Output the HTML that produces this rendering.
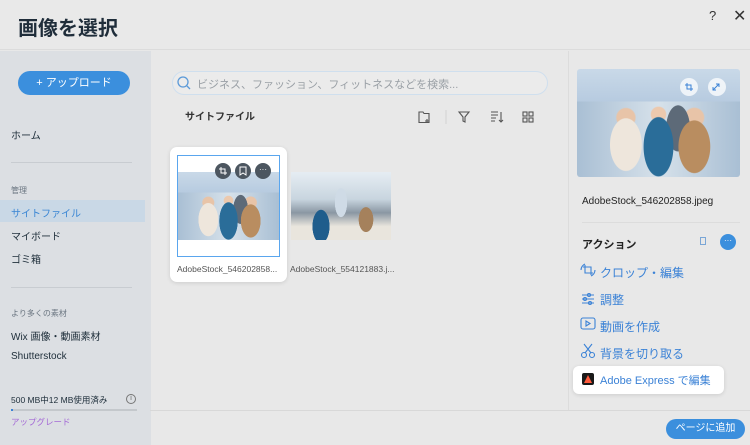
<!DOCTYPE html>
<html><head><meta charset="utf-8"><style>
*{margin:0;padding:0;box-sizing:border-box}
body{width:750px;height:445px;overflow:hidden;background:#e8e8e8;font-family:"Liberation Sans","Noto Sans CJK JP",sans-serif;position:relative;color:#20303c}
.a{position:absolute}
.photo1{background:linear-gradient(180deg,#c9d9e8 0%,#b7cbe0 30%,transparent 30%),radial-gradient(ellipse 16% 40% at 30% 70%,#eee6dc 60%,transparent 62%),radial-gradient(ellipse 15% 45% at 50% 72%,#2a6d99 60%,transparent 62%),radial-gradient(ellipse 16% 40% at 72% 72%,#b98d60 60%,transparent 62%),radial-gradient(ellipse 12% 35% at 62% 55%,#5d6a78 60%,transparent 62%),radial-gradient(circle at 30% 45%,#e8c4a8 7%,transparent 8%),radial-gradient(circle at 50% 42%,#ecc9ae 7%,transparent 8%),radial-gradient(circle at 72% 45%,#e8c4a8 7%,transparent 8%),linear-gradient(90deg,#a9bfd4,#d6e1ea 50%,#a9bfd4);}
.photo2{background:radial-gradient(ellipse 14% 40% at 30% 80%,#1f5d8c 60%,transparent 62%),radial-gradient(ellipse 12% 30% at 75% 70%,#a5815c 60%,transparent 62%),radial-gradient(ellipse 10% 35% at 50% 45%,#cfdbe6 60%,transparent 62%),linear-gradient(180deg,#e6edf3 0%,#c8d5df 40%,#8a97a3 60%,#e9e5dd 80%);}
.ic{position:absolute;width:16px;height:16px}
.act{position:absolute;left:600px;font-size:12px;color:#3b82d6}
</style></head><body>
<div class="a" style="left:0;top:0;width:750px;height:50px;background:#e9e9e9;border-bottom:1px solid #dcdcdc"></div>
<div class="a" style="left:18px;top:12px;font-size:20px;font-weight:bold;color:#1f2d3a">画像を選択</div>
<div class="a" style="left:709px;top:8px;font-size:13px;color:#333">?</div>
<div class="a" style="left:733px;top:6px;font-size:16px;color:#333">✕</div>
<!-- sidebar -->
<div class="a" style="left:0;top:51px;width:151px;height:394px;background:#dcdfe3"></div>
<div class="a" style="left:18px;top:71px;width:112px;height:24px;border-radius:12px;background:#3b8fdd;color:#fff;font-size:11px;text-align:center;line-height:24px">+ アップロード</div>
<div class="a" style="left:11px;top:127px;font-size:10px">ホーム</div>
<div class="a" style="left:11px;top:162px;width:121px;height:1px;background:#c8ccd1"></div>
<div class="a" style="left:11px;top:185px;font-size:8px;color:#6a7580">管理</div>
<div class="a" style="left:0;top:200px;width:145px;height:22px;background:#c9d8e6"></div>
<div class="a" style="left:11px;top:205px;font-size:10px;color:#3a86d4">サイトファイル</div>
<div class="a" style="left:11px;top:228px;font-size:10px">マイボード</div>
<div class="a" style="left:11px;top:251px;font-size:10px">ゴミ箱</div>
<div class="a" style="left:11px;top:287px;width:121px;height:1px;background:#c8ccd1"></div>
<div class="a" style="left:11px;top:308px;font-size:8px;color:#6a7580">より多くの素材</div>
<div class="a" style="left:11px;top:328px;font-size:10px">Wix 画像・動画素材</div>
<div class="a" style="left:11px;top:351px;font-size:10px">Shutterstock</div>
<div class="a" style="left:11px;top:394px;font-size:8.5px">500 MB中12 MB使用済み</div>
<div class="a" style="left:126px;top:394px;width:10px;height:10px;border:1px solid #777;border-radius:50%;font-size:7px;text-align:center;line-height:8px;color:#666">i</div>
<div class="a" style="left:11px;top:409px;width:126px;height:2px;background:#c4c8cc"></div>
<div class="a" style="left:11px;top:409px;width:2px;height:2px;background:#3b82d6"></div>
<div class="a" style="left:11px;top:416px;font-size:8.5px;color:#a46ad6">アップグレード</div>
<!-- main -->
<div class="a" style="left:172px;top:71px;width:376px;height:24px;border:1px solid #cfdfee;border-radius:12px;background:#ebebeb"></div>
<svg class="a" style="left:176px;top:75px" width="16" height="16"><circle cx="7" cy="7" r="5" fill="none" stroke="#5c9ad8" stroke-width="1.3"/><path d="M11 11l3 3" stroke="#5c9ad8" stroke-width="1.3"/></svg>
<div class="a" style="left:197px;top:76px;font-size:11px;color:#9aa0a6">ビジネス、ファッション、フィットネスなどを検索...</div>
<div class="a" style="left:185px;top:108px;font-size:10px;font-weight:bold;color:#333">サイトファイル</div>
<svg class="a" style="left:417px;top:109px" width="120" height="16" fill="none" stroke="#555" stroke-width="1.1"><path d="M2 3h4l1 1.5h5v9H2z M10 10v4 M8 12h4"/><line x1="29" y1="1" x2="29" y2="15" stroke="#d4d4d4"/><path d="M42 3h10l-4 5v5l-2-1v-4z"/><path d="M74 3h7M74 6h7M74 9h5M74 12h4M84 3v10M82 11l2 2 2-2" /><rect x="106" y="3" width="4" height="4"/><rect x="112" y="3" width="4" height="4"/><rect x="106" y="9" width="4" height="4"/><rect x="112" y="9" width="4" height="4"/></svg>
<div class="a" style="left:170px;top:147px;width:117px;height:135px;background:#fff;border-radius:7px;box-shadow:0 1px 4px rgba(0,0,0,.12)"></div>
<div class="a" style="left:177px;top:155px;width:103px;height:102px;border:1px solid #5aa6ee"></div>
<div class="a photo1" style="left:178px;top:172px;width:101px;height:68px"></div>
<div class="a" style="left:215px;top:163px;width:16px;height:16px;border-radius:50%;background:#4c5660"></div>
<div class="a" style="left:235px;top:163px;width:16px;height:16px;border-radius:50%;background:#4c5660"></div>
<div class="a" style="left:255px;top:163px;width:16px;height:16px;border-radius:50%;background:#4c5660;color:#fff;font-size:8px;text-align:center;line-height:14px">···</div>
<svg class="a" style="left:215px;top:163px" width="56" height="16" fill="none" stroke="#fff" stroke-width="1"><path d="M6 4v6h6M4 6h6v6"/><path d="M25 4h6v8l-3-2-3 2z"/></svg>
<div class="a" style="left:177px;top:264px;font-size:8.5px;color:#555">AdobeStock_546202858...</div>
<div class="a photo2" style="left:291px;top:172px;width:100px;height:68px"></div>
<div class="a" style="left:290px;top:264px;font-size:8.5px;color:#555">AdobeStock_554121883.j...</div>
<!-- right panel -->
<div class="a" style="left:568px;top:51px;width:1px;height:360px;background:#dcdcdc"></div>
<div class="a photo1" style="left:577px;top:69px;width:163px;height:108px;border-radius:3px"></div>
<div class="a" style="left:680px;top:78px;width:18px;height:18px;border-radius:50%;background:rgba(255,255,255,.75)"></div>
<div class="a" style="left:708px;top:78px;width:18px;height:18px;border-radius:50%;background:rgba(255,255,255,.75)"></div>
<svg class="a" style="left:680px;top:78px" width="46" height="18" fill="none" stroke="#3b82d6" stroke-width="1"><path d="M7 5v6h6M5 7h6v6"/><path d="M33 12l6-6M36 6h3v3M33 9v3h3"/></svg>
<div class="a" style="left:582px;top:196px;font-size:10px;color:#222">AdobeStock_546202858.jpeg</div>
<div class="a" style="left:582px;top:222px;width:158px;height:1px;background:#dcdcdc"></div>
<div class="a" style="left:582px;top:236px;font-size:11px;font-weight:bold;color:#222">アクション</div>
<div class="a" style="left:700px;top:237px;width:6px;height:8px;border:1px solid #7aa6d6"></div>
<div class="a" style="left:720px;top:234px;width:16px;height:16px;border-radius:50%;background:#3b8fdd;color:#fff;font-size:8px;text-align:center;line-height:14px">···</div>
<svg class="a" style="left:580px;top:262px" width="16" height="110" fill="none" stroke="#3b82d6" stroke-width="1.1"><path d="M5 3v8h8M3 5h8v8"/><path d="M1 8a7 7 0 0 1 4-6M15 8a7 7 0 0 1-4 6"/><path d="M2 33h12M2 37h12M2 41h12"/><circle cx="9" cy="33" r="1.5"/><circle cx="5" cy="37" r="1.5"/><circle cx="10" cy="41" r="1.5"/><rect x="1" y="56" width="14" height="11" rx="2"/><path d="M6 59v5l4-2.5z"/><circle cx="4" cy="93" r="2.5"/><circle cx="12" cy="93" r="2.5"/><path d="M5 91l7-9M11 91L4 82"/></svg>
<div class="act" style="top:264px">クロップ・編集</div>
<div class="act" style="top:291px">調整</div>
<div class="act" style="top:318px">動画を作成</div>
<div class="act" style="top:345px">背景を切り取る</div>
<div class="a" style="left:573px;top:366px;width:151px;height:28px;background:#fff;border-radius:6px;box-shadow:0 1px 4px rgba(0,0,0,.12)"></div>
<div class="a" style="left:582px;top:373px;width:12px;height:12px;background:#1a1a1a;border-radius:2px"></div>
<div class="a" style="left:584px;top:375px;width:0;height:0;border-left:4px solid transparent;border-right:4px solid transparent;border-bottom:8px solid #ff5a3c"></div>
<div class="a" style="left:600px;top:372px;font-size:11px;color:#3b82d6">Adobe Express で編集</div>
<div class="a" style="left:150px;top:410px;width:600px;height:1px;background:#d8d8d8"></div>
<div class="a" style="left:666px;top:419px;width:79px;height:20px;border-radius:10px;background:#3b8fdd;color:#fff;font-size:10px;text-align:center;line-height:20px">ページに追加</div>
</body></html>
